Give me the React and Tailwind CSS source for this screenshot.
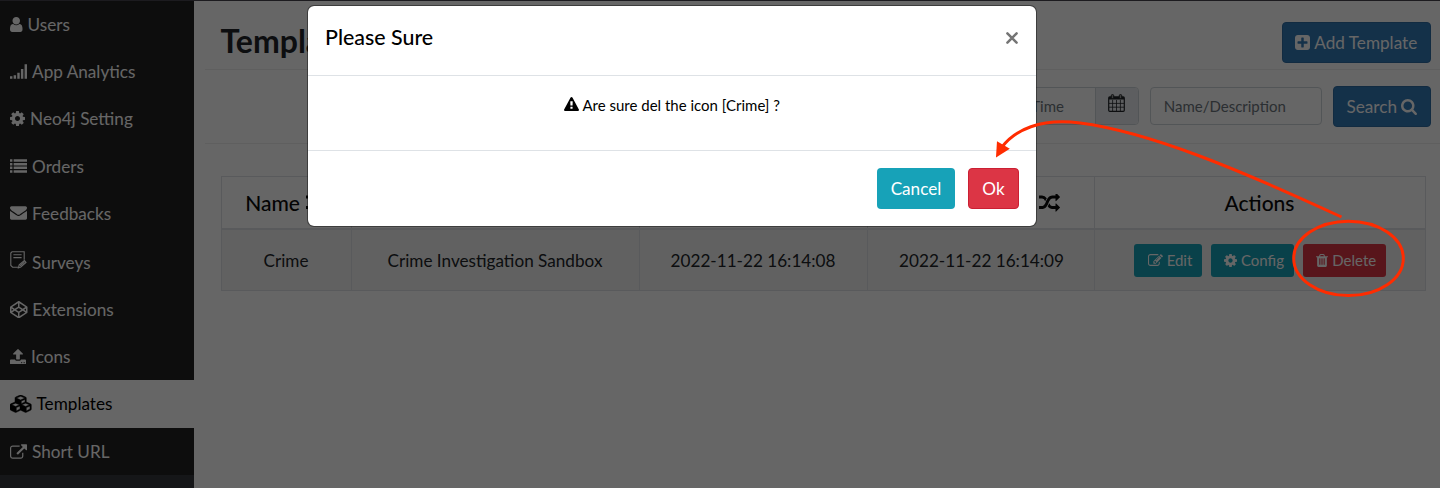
import React from "react";

const PATHS = {
  user: ["256 128 1280 1536", "M1536 1399q0 109-62.5 187t-150.5 78h-854q-88 0-150.5-78t-62.5-187q0-85 8.5-160.5t31.5-152 58.5-131 94-89 134.5-34.5q131 128 313 128t313-128q76 0 134.5 34.5t94 89 58.5 131 31.5 152 8.5 160.5zm-256-887q0 159-112.5 271.5t-271.5 112.5-271.5-112.5-112.5-271.5 112.5-271.5 271.5-112.5 271.5 112.5 112.5 271.5z"],
  signal: ["0 0 1792 1536", "M0 1280h256v256H0zM384 1152h256v384H384zM768 896h256v640H768zM1152 512h256v1024h-256zM1536 0h256v1536h-256z"],
  cog: ["128 128 1536 1536", "M1152 896q0-106-75-181t-181-75-181 75-75 181 75 181 181 75 181-75 75-181zm512-109v222q0 12-8 23t-20 13l-185 28q-19 54-39 91 35 50 107 138 10 12 10 25t-9 23q-27 37-99 108t-94 71q-12 0-26-9l-138-108q-44 23-91 38-16 136-29 186-7 28-36 28h-222q-14 0-24.5-8.5t-11.5-21.5l-28-184q-49-16-90-37l-141 107q-10 9-25 9-14 0-25-11-126-114-165-168-7-10-7-23 0-12 8-23 15-21 51-66.5t54-70.5q-27-50-41-99l-183-27q-13-2-21-12.5t-8-23.5v-222q0-12 8-23t19-13l186-28q14-46 39-92-40-57-107-138-10-12-10-24 0-10 9-23 26-36 98.5-107.5t94.5-71.5q13 0 26 10l138 107q44-23 91-38 16-136 29-186 7-28 36-28h222q14 0 24.5 8.5t11.5 21.5l28 184q49 16 90 37l142-107q9-9 24-9 13 0 25 10 129 119 165 170 7 8 7 22 0 12-8 23-15 21-51 66.5t-54 70.5q26 50 41 98l183 28q13 2 21 12.5t8 23.5z"],
  list: ["0 0 1792 1408", "M0 0h256v256H0zM0 384h256v256H0zM0 768h256v256H0zM0 1152h256v256H0zM384 0h1408v256H384zM384 384h1408v256H384zM384 768h1408v256H384zM384 1152h1408v256H384z"],
  envelope: ["0 256 1792 1408", "M1792 710v794q0 66-47 113t-113 47h-1472q-66 0-113-47t-47-113v-794q44 49 101 87 362 246 497 345 57 42 92.5 65.5t94.5 48 110 24.5h2q51 0 110-24.5t94.5-48 92.5-65.5q170-123 498-345 57-39 100-87zm0-294q0 79-49 151t-122 123q-376 261-468 325-10 7-42.5 31t-54 38.5-52 32.5-57.5 27-50 9h-2q-23 0-50-9t-57.5-27-52-32.5-54-38.5-42.5-31q-91-64-262-182.5t-205-142.5q-62-42-117-115.5t-55-136.5q0-78 41.5-130t118.5-52h1472q65 0 112.5 47t47.5 113z"],
  codepen: ["0 0 1792 1792", "M216 1169l603 402v-359l-334-223zm-62-144l193-129-193-129v258zm819 546l603-402-269-180-334 223v359zm-77-494l272-182-272-182-272 182zm-411-275l334-223v-359l-603 402zm960 94l193 129v-258zm-138-94l269-180-603-402v359zm485-180v546q0 41-34 64l-819 546q-21 13-43 13t-43-13l-819-546q-34-23-34-64v-546q0-41 34-64l819-546q21-13 43-13t43 13l819 546q34 23 34 64z"],
  cubes: ["0 0 2176 1792", "M640 1632l384-192v-314l-384 164v342zm-64-454l404-173-404-173-404 173zm1088 454l384-192v-314l-384 164v342zm-64-454l404-173-404-173-404 173zm-448-293l384-165v-266l-384 164v267zm-64-379l441-189-441-189-441 189zm1088 518v416q0 36-19 67t-52 47l-448 224q-25 14-57 14t-57-14l-448-224q-4-2-7-4-2 2-7 4l-448 224q-25 14-57 14t-57-14l-448-224q-33-16-52-47t-19-67v-416q0-38 21.5-70t56.5-48l434-186v-400q0-38 21.5-70t56.5-48l448-192q23-10 50-10t50 10l448 192q35 16 56.5 48t21.5 70v400l434 186q36 16 57 48t21 70z"],
  upload: ["64 64 1664 1600", "M1344 1472q0-26-19-45t-45-19-45 19-19 45 19 45 45 19 45-19 19-45zm256 0q0-26-19-45t-45-19-45 19-19 45 19 45 45 19 45-19 19-45zm128-224v320q0 40-28 68t-68 28h-1472q-40 0-68-28t-28-68v-320q0-40 28-68t68-28h427q21 56 70.5 92t110.5 36h256q61 0 110.5-36t70.5-92h427q40 0 68 28t28 68zm-325-648q-17 40-59 40h-256v448q0 26-19 45t-45 19h-256q-26 0-45-19t-19-45v-448h-256q-42 0-59-40-17-39 14-69l448-448q18-19 45-19t45 19l448 448q31 30 14 69z"],
  link: ["0 0 1792 1536", "M1408 928v320q0 119-84.5 203.5t-203.5 84.5h-832q-119 0-203.5-84.5t-84.5-203.5v-832q0-119 84.5-203.5t203.5-84.5h704q14 0 23 9t9 23v64q0 14-9 23t-23 9h-704q-66 0-113 47t-47 113v832q0 66 47 113t113 47h832q66 0 113-47t47-113v-320q0-14 9-23t23-9h64q14 0 23 9t9 23zm384-864v512q0 26-19 45t-45 19-45-19l-176-176-652 652q-10 10-23 10t-23-10l-114-114q-10-10-10-23t10-23l652-652-176-176q-19-19-19-45t19-45 45-19h512q26 0 45 19t19 45z"],
  warning: ["0 0 1792 1664", "M1024 1375v-190q0-14-9.5-23.5t-22.5-9.5h-192q-13 0-22.5 9.5t-9.5 23.5v190q0 14 9.5 23.5t22.5 9.5h192q13 0 22.5-9.5t9.5-23.5zm-2-374l18-459q0-12-10-19-13-11-24-11h-220q-11 0-24 11-10 7-10 21l17 457q0 10 10 16.5t24 6.5h185q14 0 23.5-6.5t10.5-16.5zm-14-934l768 1408q35 63-2 126-17 29-46.5 46t-63.5 17h-1536q-34 0-63.5-17t-46.5-46q-37-63-2-126l768-1408q17-31 47-49t65-18 65 18 47 49z"],
  plus: ["128 128 1536 1536", "M1408 960v-128q0-26-19-45t-45-19h-320v-320q0-26-19-45t-45-19h-128q-26 0-45 19t-19 45v320h-320q-26 0-45 19t-19 45v128q0 26 19 45t45 19h320v320q0 26 19 45t45 19h128q26 0 45-19t19-45v-320h320q26 0 45-19t19-45zm256-544v960q0 119-84.5 203.5t-203.5 84.5h-960q-119 0-203.5-84.5t-84.5-203.5v-960q0-119 84.5-203.5t203.5-84.5h960q119 0 203.5 84.5t84.5 203.5z"],
  search: ["64 128 1664 1664", "M1216 832q0-185-131.5-316.5t-316.5-131.5-316.5 131.5-131.5 316.5 131.5 316.5 316.5 131.5 316.5-131.5 131.5-316.5zm512 832q0 52-38 90t-90 38q-54 0-90-38l-343-342q-179 124-399 124-143 0-273.5-55.5t-225-150-150-225-55.5-273.5 55.5-273.5 150-225 225-150 273.5-55.5 273.5 55.5 225 150 150 225 55.5 273.5q0 220-124 399l343 343q37 37 37 90z"],
  random: ["0 160 1792 1472", "M666 481q-60 92-137 273-22-45-37-72.5t-40.5-63.5-51-56.5-63-35-81.5-14.5h-224q-14 0-23-9t-9-23v-192q0-14 9-23t23-9h224q250 0 410 225zm1126 799q0 14-9 23l-320 320q-9 9-23 9-13 0-22.5-9.5t-9.5-22.5v-192q-32 0-85 .5t-81 1-73-1-71-5-64-10.5-63-18.5-58-28.5-59-40-55-53.5-56-69.5q59-93 136-273 22 45 37 72.5t40.5 63.5 51 56.5 63 35 81.5 14.5h256v-192q0-14 9-23t23-9q12 0 24 10l319 319q9 9 9 23zm0-896q0 14-9 23l-320 320q-9 9-23 9-13 0-22.5-9.5t-9.5-22.5v-192h-256q-48 0-87 15t-69 45-51 61.5-45 77.5q-32 62-78 171-29 66-49.5 111t-54 105-64 100-74 83-90 68.5-106.5 42-128 16.5h-224q-14 0-23-9t-9-23v-192q0-14 9-23t23-9h224q48 0 87-15t69-45 51-61.5 45-77.5q32-62 78-171 29-66 49.5-111t54-105 64-100 74-83 90-68.5 106.5-42 128-16.5h256v-192q0-14 9-23t23-9q12 0 24 10l319 319q9 9 9 23z"],
  edit: ["0 128 1792 1408", "M888 1184l116-116-152-152-116 116v56h96v96h56zm440-720q-16-16-33 1l-350 350q-17 17-1 33t33-1l350-350q17-17 1-33zm80 594v190q0 119-84.5 203.5t-203.5 84.5h-832q-119 0-203.5-84.5t-84.5-203.5v-832q0-119 84.5-203.5t203.5-84.5h832q63 0 117 25 15 7 18 23 3 17-9 29l-49 49q-14 14-32 8-23-6-45-6h-832q-66 0-113 47t-47 113v832q0 66 47 113t113 47h832q66 0 113-47t47-113v-126q0-13 9-22l64-64q15-15 35-7t20 29zm-96-738l288 288-672 672h-288v-288zm444 132l-92 92-288-288 92-92q28-28 68-28t68 28l152 152q28 28 28 68t-28 68z"],
  trash: ["192 128 1408 1536", "M704 1376v-704q0-14-9-23t-23-9h-64q-14 0-23 9t-9 23v704q0 14 9 23t23 9h64q14 0 23-9t9-23zm256 0v-704q0-14-9-23t-23-9h-64q-14 0-23 9t-9 23v704q0 14 9 23t23 9h64q14 0 23-9t9-23zm256 0v-704q0-14-9-23t-23-9h-64q-14 0-23 9t-9 23v704q0 14 9 23t23 9h64q14 0 23-9t9-23zm-544-992h448l-48-117q-7-9-17-11h-317q-10 2-17 11zm928 32v64q0 14-9 23t-23 9h-96v948q0 83-47 143.5t-113 60.5h-832q-66 0-113-58.5t-47-141.5v-952h-96q-14 0-23-9t-9-23v-64q0-14 9-23t23-9h309l70-167q15-37 54-63t79-26h320q40 0 79 26t54 63l70 167h309q14 0 23 9t9 23z"],
};

function Icon({ name, className }) {
  const [viewBox, d] = PATHS[name];
  return (
    <svg viewBox={viewBox} fill="currentColor" className={"shrink-0 " + className} aria-hidden="true">
      <path d={d} />
    </svg>
  );
}

function SurveyIcon() {
  return (
    <svg viewBox="0 0 17 18" className="mb-[5px] h-[18px] w-[17px] shrink-0" fill="none" stroke="currentColor" strokeWidth="1.1" aria-hidden="true">
      <path d="M8 16.2H2.6L.8 14.4V2L2 .8h12.2v8M3.4 3.8h8.2M3.4 6.6h8.2" />
      <path d="M8.4 16.8l.8-3 5.2-4.2 1.6 1.9-5.2 4.4zM10 14.9l4.4-3.7" />
    </svg>
  );
}

function CalendarIcon() {
  return (
    <svg viewBox="0 0 17 18" className="mb-[6px] h-[18px] w-[17px]" fill="none" stroke="currentColor" aria-hidden="true">
      <rect x=".7" y="2.9" width="15.6" height="14.4" rx="1" strokeWidth="1.2" />
      <path d="M1 3h15v2.6H1z" fill="currentColor" stroke="none" />
      <path d="M1 9.4h15M1 13.2h15M4.6 6v11M8.5 6v11M12.4 6v11" strokeWidth=".8" />
      <rect x="3.3" y=".6" width="2.4" height="4" rx="1" strokeWidth="1" fill="#999" />
      <rect x="11.3" y=".6" width="2.4" height="4" rx="1" strokeWidth="1" fill="#999" />
    </svg>
  );
}

const NAV = [
  { label: "Users", icon: <Icon name="user" className="h-[15px] w-[12.5px]" />, gap: "gap-[4.8px]" },
  { label: "App Analytics", icon: <Icon name="signal" className="h-[15px] w-[17px]" />, gap: "gap-[4.8px]" },
  { label: "Neo4j Setting", icon: <Icon name="cog" className="h-[15px] w-[15px]" />, gap: "gap-[4.8px]" },
  { label: "Orders", icon: <Icon name="list" className="h-[14px] w-[17px]" />, gap: "gap-[4.8px]" },
  { label: "Feedbacks", icon: <Icon name="envelope" className="h-[14px] w-[17px]" />, gap: "gap-[4.8px]" },
  { label: "Surveys", icon: <SurveyIcon />, gap: "gap-[4.8px]", tall: true },
  { label: "Extensions", icon: <Icon name="codepen" className="h-[17.5px] w-[17.5px]" />, gap: "gap-[4.5px]" },
  { label: "Icons", icon: <Icon name="upload" className="h-[15.5px] w-[16px]" />, gap: "gap-[4.8px]" },
  { label: "Templates", icon: <Icon name="cubes" className="h-[17.5px] w-[21.3px] stroke-black stroke-[50]" />, gap: "gap-[5px]", active: true },
  { label: "Short URL", icon: <Icon name="link" className="h-[15px] w-[17px]" />, gap: "gap-[4.8px]" },
];

function Sidebar() {
  return (
    <nav className="flex h-full w-[193.5px] shrink-0 flex-col bg-[#35383d] pt-[1px] text-[17.15px] leading-none">
      {NAV.map((item) => (
        <a
          key={item.label}
          className={
            "flex shrink-0 items-center pl-[10.3px] " + item.gap + " " +
            (item.tall ? "h-[49px] pt-[3px] " : "h-[47.2px] ") +
            (item.active ? "bg-white text-black" : "bg-[#222] text-white")
          }
        >
          {item.icon}
          <span>{item.label}</span>
        </a>
      ))}
    </nav>
  );
}

const COLS = "grid grid-cols-[130px_288px_228px_227px_331px]";

function Main() {
  return (
    <main className="flex min-w-0 flex-1 flex-col pl-[11px]">
      <header className="flex h-[69.5px] items-center justify-between border-b border-[#eee] pr-[9px] pl-[16px]">
        <h1 className="pt-[14px] text-[32px] leading-none font-bold text-[#212529]">Templates</h1>
        <button className="mt-[17px] flex h-[41px] w-[149.5px] items-center justify-center gap-[4px] rounded-[4px] border border-[#2e6da4] bg-[#337ab7] text-[17.15px] text-white">
          <Icon name="plus" className="h-[15px] w-[15px]" />
          Add Template
        </button>
      </header>
      <div className="flex h-[74px] items-center justify-end gap-[10.8px] border-b border-[#eee] pr-[9px]">
        <div className="flex h-[38px] w-[240px] overflow-hidden rounded-[4px] border border-[#ced4da] text-[15px] text-[#6c757d]">
          <div className="flex flex-1 items-center justify-end pt-px pr-[31px]">Time</div>
          <div className="flex w-[43px] items-center justify-center border-l border-[#ced4da] bg-[#e9ecef] text-[#212529]">
            <CalendarIcon />
          </div>
        </div>
        <div className="flex h-[38px] w-[172px] items-center rounded-[4px] border border-[#ced4da] pt-px pl-[13px] text-[15px] text-[#6c757d]">
          Name/Description
        </div>
        <button className="flex h-[41px] w-[98.5px] items-center justify-center gap-[4px] rounded-[4px] border border-[#2e6da4] bg-[#337ab7] pt-px text-[17.15px] text-white">
          Search
          <Icon name="search" className="h-[16px] w-[16px]" />
        </button>
      </div>
      <section className="mt-[32.5px] ml-[16px] w-[1205px] border-l border-[#dee2e6] text-[#0a0a0a]">
        <div className={COLS + " h-[54px] border-t border-b-2 border-[#dee2e6] text-[21px] font-medium"}>
          <div className="flex items-center justify-center gap-[6px] border-r border-[#dee2e6]">Name <Icon name="random" className="h-[18px] w-[21px]" /></div>
          <div className="border-r border-[#dee2e6]" />
          <div className="border-r border-[#dee2e6]" />
          <div className="flex items-center justify-end border-r border-[#dee2e6] pr-[33.5px]"><Icon name="random" className="h-[18px] w-[21px]" /></div>
          <div className="flex items-center justify-center border-r border-[#dee2e6]">Actions</div>
        </div>
        <div className={COLS + " h-[61px] border-b border-[#dee2e6] bg-[#f2f2f2] text-[17.15px] text-[#212529]"}>
          <div className="flex items-center justify-center border-r border-[#dee2e6] pt-[2px]">Crime</div>
          <div className="flex items-center justify-center border-r border-[#dee2e6] pt-[2px]">Crime Investigation Sandbox</div>
          <div className="flex items-center justify-center border-r border-[#dee2e6] pt-[2px]">2022-11-22 16:14:08</div>
          <div className="flex items-center justify-center border-r border-[#dee2e6] pt-[2px] pl-[2px]">2022-11-22 16:14:09</div>
          <div className="flex items-center justify-center gap-[9px] border-r border-[#dee2e6] text-[15px] text-white">
            <button className="flex h-[33px] w-[68px] items-center justify-center gap-[4px] rounded-[3px] bg-[#17a2b8] pl-[5px]"><Icon name="edit" className="h-[12px] w-[15px]" />Edit</button>
            <button className="flex h-[33px] w-[83px] items-center justify-center gap-[4px] rounded-[3px] bg-[#17a2b8] pl-[4px]"><Icon name="cog" className="h-[13px] w-[13px]" />Config</button>
            <button className="flex h-[33px] w-[83px] items-center justify-center gap-[4.5px] rounded-[3px] bg-[#dc3545] pl-[4px]"><Icon name="trash" className="h-[13px] w-[12px]" />Delete</button>
          </div>
        </div>
      </section>
    </main>
  );
}

function Dialog() {
  return (
    <div role="dialog" className="absolute top-[5px] left-[307px] flex h-[222px] w-[729.5px] flex-col overflow-hidden rounded-[7px] border border-black/40 bg-white bg-clip-padding text-black">
      <div className="flex h-[70px] justify-between border-b border-[#dee2e6] pr-[18px] pl-[17px]">
        <h2 className="pt-[20.5px] text-[21.4px] leading-[21px] font-medium">Please Sure</h2>
        <svg viewBox="0 0 12 12" className="mt-[25.5px] h-[12px] w-[12px]" stroke="#757575" strokeWidth="2.5" strokeLinecap="round" aria-label="Close">
          <path d="M1.4 1.4l9.2 9.2M10.6 1.4l-9.2 9.2" />
        </svg>
      </div>
      <div className="flex h-[75px] items-start justify-center gap-[3px] border-b border-[#dee2e6] pt-[20.5px] pl-px text-[15px] leading-[17px]">
        <Icon name="warning" className="h-[14px] w-[15px]" />
        Are sure del the icon [Crime] ?
      </div>
      <div className="flex flex-1 items-center justify-end gap-[13px] pr-[17px] text-[17.15px] text-white">
        <button className="h-[41px] w-[78px] rounded-[4px] bg-[#17a2b8] pl-px">Cancel</button>
        <button className="h-[41px] w-[51px] rounded-[4px] border border-[#cb1f33] bg-[#dc3545] pl-px">Ok</button>
      </div>
    </div>
  );
}

function Annotation() {
  return (
    <svg viewBox="0 0 1440 488" className="absolute inset-0 h-[488px] w-[1440px]" fill="none" aria-hidden="true">
      <path d="M1341.5 217C1240 170 1150 132 1080 123C1040 118 1015 130 1002 147" stroke="#ff2c00" strokeWidth="3" />
      <path d="M996 157.5L997 141.3L1009.8 148.8Z" fill="#ff2c00" />
      <ellipse cx="1348.5" cy="258.4" rx="54.8" ry="37.2" stroke="#ff2c00" strokeWidth="3" />
    </svg>
  );
}

export default function App() {
  return (
    <div className="relative h-[488px] w-[1440px] overflow-hidden bg-white font-['Lato',sans-serif]">
      <div className="flex h-full">
        <Sidebar />
        <Main />
      </div>
      <div className="absolute inset-0 border-t border-[#1c1b1f] bg-black/60" />
      <Dialog />
      <Annotation />
    </div>
  );
}
